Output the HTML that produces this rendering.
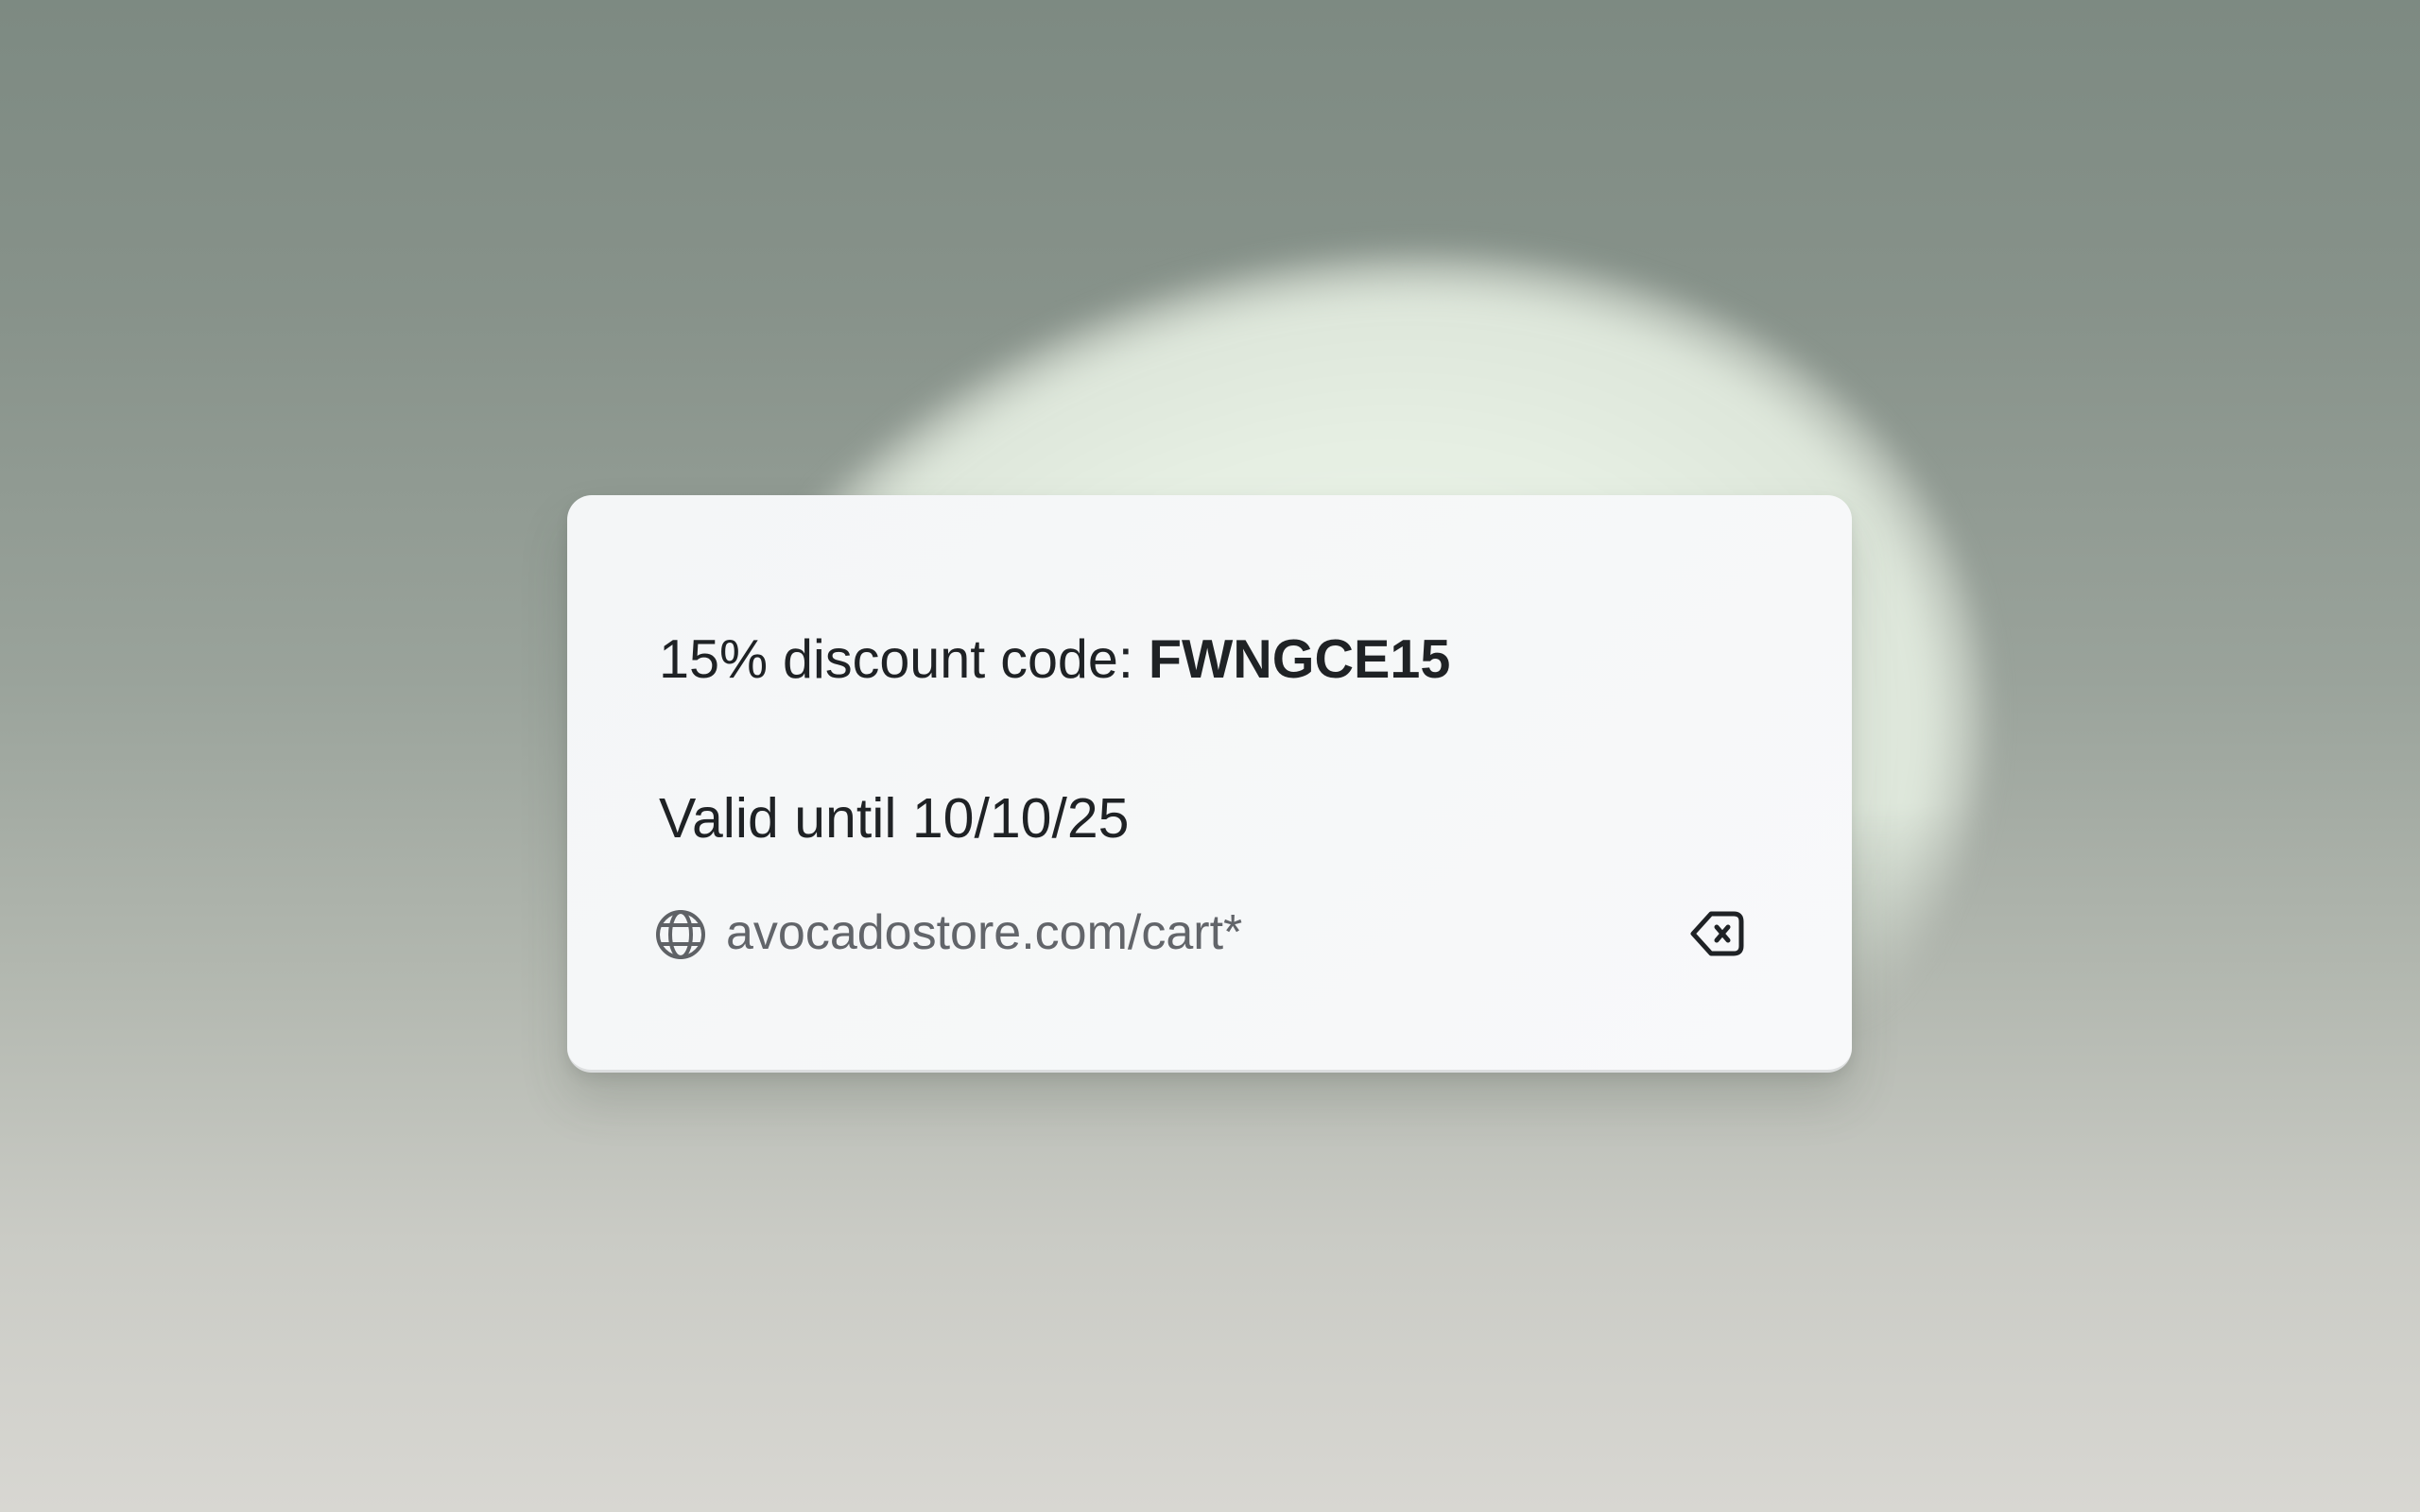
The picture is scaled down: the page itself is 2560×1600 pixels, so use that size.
<!DOCTYPE html>
<html><head><meta charset="utf-8"><style>
html,body{margin:0;padding:0;width:2560px;height:1600px;overflow:hidden}
body{position:relative;
background:linear-gradient(180deg,#7d8a82 0%,#87928a 20%,#9aa39b 45%,#b3b8b0 65%,#cacbc5 82%,#d8d7d2 100%);
font-family:"Liberation Sans",sans-serif}
.glowwrap{position:absolute;left:0;top:0;width:2560px;height:1600px;overflow:hidden;
-webkit-mask-image:linear-gradient(180deg,#000 0,#000 850px,transparent 1100px);mask-image:linear-gradient(180deg,#000 0,#000 850px,transparent 1100px)}
.glow{position:absolute;left:680px;top:279px;width:1440px;height:1120px;border-radius:50%;transform:rotate(-18deg);
background:radial-gradient(ellipse at 50% 50%,#eef6ec 0%,#e6efe3 45%,#dde6da 64%,rgba(215,222,211,0.5) 69%,rgba(200,208,198,0) 71%);filter:blur(14px)}
.card{position:absolute;left:600px;top:524px;width:1359px;height:608px;border-radius:26px;
background:linear-gradient(135deg,#f4f6f7,#f8f9fa);border-bottom:3px solid #dcdedf;
box-shadow:0 30px 50px rgba(60,70,60,0.18),0 6px 14px rgba(0,0,0,0.08)}
.t{position:absolute;left:697px;color:#1f2225;white-space:nowrap;line-height:1}
.u{position:absolute;left:768px;top:961px;font-size:52px;color:#62656a;white-space:nowrap;line-height:1}
</style></head><body>
<div class="glowwrap"><div class="glow"></div></div>
<div class="card"></div>
<div class="t" style="top:670px;font-size:57.5px">15% discount code: <b>FWNGCE15</b></div>
<div class="t" style="top:837px;font-size:59px">Valid until 10/10/25</div>
<svg style="position:absolute;left:690px;top:959px" width="60" height="60" viewBox="690 959 60 60" fill="none" stroke="#5f6266" stroke-width="4">
<circle cx="720" cy="989" r="24"/>
<ellipse cx="720" cy="989" rx="11" ry="24"/>
<path d="M698 979H742M698 999H742"/>
</svg>
<div class="u">avocadostore.com/cart*</div>
<svg style="position:absolute;left:1780px;top:958px" width="72" height="60" viewBox="1780 958 72 60" fill="none" stroke="#1f2225" stroke-width="5" stroke-linejoin="round" stroke-linecap="round">
<path d="M1810 967H1834Q1842 967 1842 975V1001Q1842 1009 1834 1009H1810L1791 988Z"/>
<path d="M1816 981L1828 995M1828 981L1816 995"/>
</svg>
</body></html>
